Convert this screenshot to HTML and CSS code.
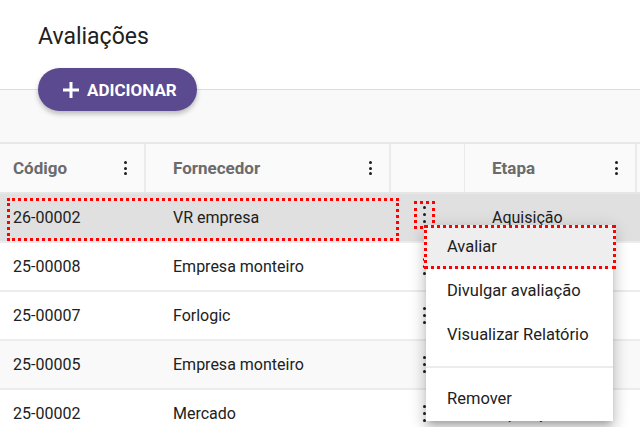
FILE: index.html
```html
<!DOCTYPE html>
<html lang="pt-BR">
<head>
    <meta charset="UTF-8">
    <meta name="viewport" content="width=device-width, initial-scale=1.0">
    <title>Avaliações</title>
    <link rel="stylesheet" href="styles.css">
</head>
<body>

<div class="page-header">
    <h1 class="title">Avaliações</h1>
    <button class="btn-add">
        <svg width="18" height="18" viewBox="0 0 18 18"><path d="M9 1v16M1 9h16" stroke="#fff" stroke-width="3" fill="none"/></svg>
        ADICIONAR
    </button>
</div>

<div class="content">
    <div class="grid">
        <div class="row head">
            <div class="cell">Código <span class="kebab small"><i></i><i></i><i></i></span></div>
            <div class="cell">Fornecedor <span class="kebab small"><i></i><i></i><i></i></span></div>
            <div class="cell"></div>
            <div class="cell">Etapa <span class="kebab small"><i></i><i></i><i></i></span></div>
            <div class="cell"></div>
        </div>

        <div class="row selected">
            <div class="cell">26-00002</div>
            <div class="cell">VR empresa</div>
            <div class="cell actions"><span class="kebab marked"><i></i><i></i><i></i></span></div>
            <div class="cell">Aquisição</div>
            <div class="cell"></div>
            <div class="mark-row"></div>
        </div>
        <div class="row">
            <div class="cell">25-00008</div>
            <div class="cell">Empresa monteiro</div>
            <div class="cell actions"><span class="kebab"><i></i><i></i><i></i></span></div>
            <div class="cell">Aquisição</div>
            <div class="cell"></div>
        </div>
        <div class="row">
            <div class="cell">25-00007</div>
            <div class="cell">Forlogic</div>
            <div class="cell actions"><span class="kebab"><i></i><i></i><i></i></span></div>
            <div class="cell">Homologação</div>
            <div class="cell"></div>
        </div>
        <div class="row alt">
            <div class="cell">25-00005</div>
            <div class="cell">Empresa monteiro</div>
            <div class="cell actions"><span class="kebab"><i></i><i></i><i></i></span></div>
            <div class="cell">Aquisição</div>
            <div class="cell"></div>
        </div>
        <div class="row">
            <div class="cell">25-00002</div>
            <div class="cell">Mercado</div>
            <div class="cell actions"><span class="kebab"><i></i><i></i><i></i></span></div>
            <div class="cell">Aquisição</div>
            <div class="cell"></div>
        </div>
    </div>

    <ul class="menu">
        <li class="active">Avaliar</li>
        <li>Divulgar avaliação</li>
        <li>Visualizar Relatório</li>
        <li class="divider"></li>
        <li>Remover</li>
    </ul>
</div>

</body>
</html>
```

FILE: styles.css
```css
html, body {
    height: 428px;
    overflow: hidden;
}
body {
    margin: 0;
    font-family: Roboto, "Liberation Sans", sans-serif;
    color: #212121;
    background: #fff;
}
.page-header {
    height: 90px;
    padding-left: 38px;
    border-bottom: 1px solid #dedede;
    box-sizing: border-box;
}
.title {
    margin: 0;
    padding-top: 23px;
    font-size: 23px;
    font-weight: 400;
    line-height: 28px;
    color: #212121;
}
.btn-add {
    position: relative;
    z-index: 2;
    display: flex;
    align-items: center;
    gap: 7px;
    margin-top: 17px;
    height: 43px;
    padding: 0 20px 0 24px;
    border: none;
    border-radius: 22px;
    background: #5b4a8f;
    color: #fff;
    font-family: Roboto, sans-serif;
    font-size: 17px;
    font-weight: 700;
    box-shadow: 0 3px 5px rgba(0, 0, 0, 0.25);
}
.content {
    position: relative;
    background: #f9f9f9;
    padding-top: 52px;
    height: 285px;
    overflow: hidden;
}
.grid {
    border-top: 2px solid #e8e8e8;
}
.row {
    position: relative;
    display: grid;
    grid-template-columns: 146px 245px 74px 172px 1fr;
    height: 47px;
    border-bottom: 2px solid #ececec;
    background: #fff;
    font-size: 16px;
}
.row.head {
    height: 48px;
    background: #fafafa;
    color: #6b6b6b;
    font-size: 17px;
    font-weight: 700;
    border-bottom: 2px solid #e6e6e6;
}
.row.selected {
    background: #e0e0e0;
}
.row.alt {
    background: #f9f9f9;
}
.cell {
    display: flex;
    align-items: center;
    padding-left: 27px;
}
.cell:first-child {
    padding-left: 13px;
}
.head .cell {
    justify-content: space-between;
    padding-right: 7px;
    border-right: 2px solid #ebebeb;
}
.head .cell:nth-child(3) {
    border-right-width: 1px;
}
.head .cell:last-child {
    border-right: none;
}
.kebab {
    display: flex;
    flex-direction: column;
    align-items: center;
    justify-content: center;
    gap: 3.5px;
    width: 21px;
    height: 28px;
    box-sizing: border-box;
}
.kebab i {
    width: 3.5px;
    height: 3.5px;
    border-radius: 50%;
    background: #1e1e1e;
}
.kebab.small {
    gap: 2.5px;
    width: 24px;
}
.kebab.small i {
    width: 3px;
    height: 3px;
}
.cell.actions {
    padding-left: 23px;
}
.kebab.marked {
    border: 3px dotted #f00;
    margin-top: -6px;
}
.mark-row {
    position: absolute;
    left: 7px;
    top: 4px;
    width: 392px;
    height: 43px;
    border: 3px dotted #f00;
    box-sizing: border-box;
}
.menu {
    position: absolute;
    left: 426px;
    top: 135px;
    width: 187px;
    margin: 0;
    padding: 0;
    list-style: none;
    background: #fff;
    font-size: 16.5px;
    box-shadow: 0 5px 6px -3px rgba(0, 0, 0, 0.2), 0 9px 12px 1px rgba(0, 0, 0, 0.14), 0 3px 16px 2px rgba(0, 0, 0, 0.12);
}
.menu li {
    height: 44px;
    line-height: 44px;
    padding-left: 21px;
}
.menu li.active {
    background: #eeeeee;
    outline: 3px dotted #f00;
    outline-offset: -3px;
    margin-left: -2px;
    margin-right: -3px;
    padding-left: 23px;
}
.menu li.divider {
    height: 2px;
    margin: 9px 0;
    padding: 0;
    background: #ececec;
}
```
